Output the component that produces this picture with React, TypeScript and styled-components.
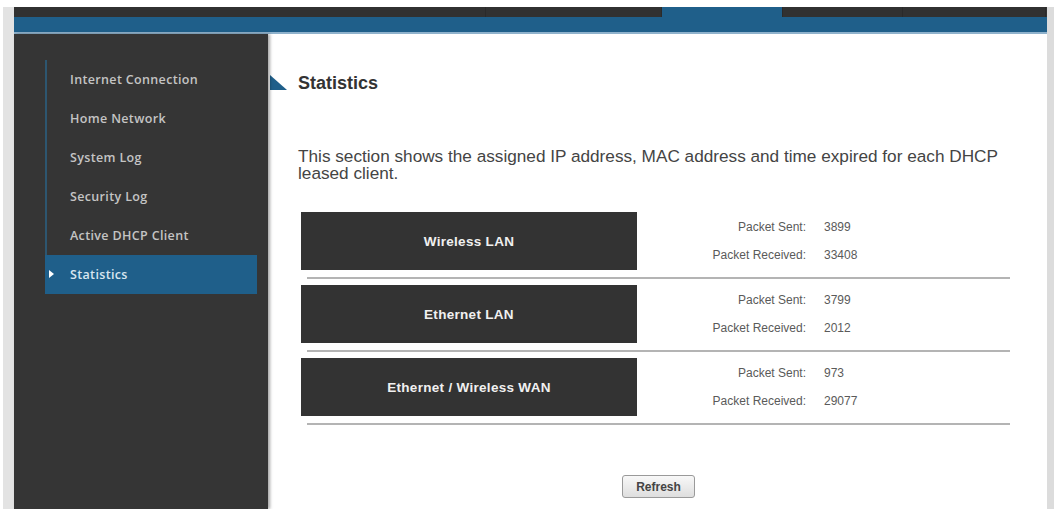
import React from "react";
import styled, { createGlobalStyle } from "styled-components";

const GlobalStyle = createGlobalStyle`
  html, body {
    margin: 0;
    padding: 0;
    background: #ffffff;
  }
  body {
    width: 1054px;
    height: 509px;
    overflow: hidden;
    font-family: "Liberation Sans", Arial, sans-serif;
  }
`;

const menu = [
  "Internet Connection",
  "Home Network",
  "System Log",
  "Security Log",
  "Active DHCP Client",
  "Statistics",
];

const stats = [
  { name: "Wireless LAN", sent: "3899", received: "33408" },
  { name: "Ethernet LAN", sent: "3799", received: "2012" },
  { name: "Ethernet / Wireless WAN", sent: "973", received: "29077" },
];

const tabs = [472, 176, 121, 120, 143];

const App = (): JSX.Element => (
  <>
    <GlobalStyle />
    <TopGap />
    <Frame>
      <TabBar>
        {tabs.map((w, i) => (
          <Tab key={i} active={i === 2} style={{ width: w }} />
        ))}
      </TabBar>
      <BlueBar />
      <Main>
        <Sidebar>
          <Nav>
            {menu.map((item) => (
              <NavItem key={item} selected={item === "Statistics"}>
                {item}
              </NavItem>
            ))}
          </Nav>
        </Sidebar>
        <Content>
          <Heading>
            <Corner />
            Statistics
          </Heading>
          <Intro>
            This section shows the assigned IP address, MAC address and time
            expired for each DHCP leased client.
          </Intro>
          <Rows>
            {stats.map((s) => (
              <Row key={s.name}>
                <Port>{s.name}</Port>
                <Counts>
                  <Label>Packet Sent:</Label>
                  <Value>{s.sent}</Value>
                  <Label>Packet Received:</Label>
                  <Value>{s.received}</Value>
                </Counts>
              </Row>
            ))}
          </Rows>
          <Actions>
            <RefreshButton>Refresh</RefreshButton>
          </Actions>
        </Content>
      </Main>
    </Frame>
  </>
);

const TopGap = styled.div`
  height: 7px;
`;

const Frame = styled.div`
  margin-left: 3px;
  width: 1033px;
  border-left: 11px solid #e3e3e3;
  border-right: 7px solid #dcdcdc;
  height: 502px;
  display: flex;
  flex-direction: column;
`;

const TabBar = styled.div`
  height: 10px;
  display: flex;
  background: #333333;
`;

const Tab = styled.div<{ active?: boolean }>`
  height: 100%;
  background: ${(p) => (p.active ? "#1f5f8a" : "#313131")};
  border-right: 1px solid #2a2a2a;
  box-sizing: border-box;
`;

const BlueBar = styled.div`
  height: 15px;
  background: #1f5f8a;
  border-bottom: 2px solid #8fb2cc;
`;

const Main = styled.div`
  flex: 1;
  display: flex;
  min-height: 0;
`;

const Sidebar = styled.div`
  width: 254px;
  background: #353535;
  padding-top: 26px;
  padding-left: 31px;
  box-sizing: border-box;
  box-shadow: 2px 0 3px rgba(0, 0, 0, 0.35);
  position: relative;
  z-index: 1;
`;

const Nav = styled.ul`
  list-style: none;
  margin: 0;
  padding: 0;
  width: 212px;
  border-left: 2px solid #2d5670;
  box-sizing: border-box;
`;

const NavItem = styled.li<{ selected?: boolean }>`
  height: 39px;
  display: flex;
  align-items: center;
  font-family: "Open Sans", "Liberation Sans", sans-serif;
  font-size: 12.5px;
  font-weight: 600;
  letter-spacing: 0.35px;
  color: ${(p) => (p.selected ? "#d8e6f0" : "#c4c4c4")};
  background: ${(p) => (p.selected ? "#1f5f8a" : "transparent")};
  margin-left: ${(p) => (p.selected ? "-2px" : "0")};
  padding-left: ${(p) => (p.selected ? "25px" : "23px")};
  position: relative;
  &::before {
    content: "";
    display: ${(p) => (p.selected ? "block" : "none")};
    position: absolute;
    left: 4px;
    top: 15px;
    border-left: 5px solid #ffffff;
    border-top: 4px solid transparent;
    border-bottom: 4px solid transparent;
  }
`;

const Content = styled.div`
  flex: 1;
  background: #ffffff;
  padding: 39px 0 0 2px;
  display: flex;
  flex-direction: column;
`;

const Heading = styled.h2`
  margin: 0;
  display: flex;
  align-items: center;
  gap: 11px;
  font-size: 18px;
  font-weight: bold;
  color: #333333;
  height: 20px;
`;

const Corner = styled.span`
  width: 0;
  height: 0;
  border-left: 17px solid #1f5f8a;
  border-top: 15px solid transparent;
  margin-top: -2px;
`;

const Intro = styled.p`
  margin: 55px 0 0 28px;
  max-width: 712px;
  font-size: 17.2px;
  line-height: 17px;
  color: #444444;
`;

const Rows = styled.div`
  margin: 30px 0 0 31px;
  display: flex;
  flex-direction: column;
  gap: 15px;
`;

const Row = styled.div`
  display: flex;
  align-items: center;
  position: relative;
  &::after {
    content: "";
    position: absolute;
    left: 6px;
    width: 703px;
    bottom: -9px;
    height: 2px;
    background: #b4b4b4;
  }
`;

const Port = styled.div`
  width: 336px;
  height: 58px;
  background: #333333;
  color: #f0f0f0;
  font-size: 13.5px;
  font-weight: bold;
  letter-spacing: 0.3px;
  display: flex;
  align-items: center;
  justify-content: center;
`;

const Counts = styled.div`
  margin-left: 69px;
  display: grid;
  grid-template-columns: 100px auto;
  column-gap: 18px;
  row-gap: 12px;
  font-size: 12px;
  line-height: 16px;
  color: #5a5a5a;
`;

const Label = styled.span`
  text-align: right;
`;

const Value = styled.span``;

const Actions = styled.div`
  display: flex;
  justify-content: center;
  margin-top: 59px;
`;

const RefreshButton = styled.button`
  width: 73px;
  height: 23px;
  border: 1px solid #9a9a9a;
  border-radius: 3px;
  background: linear-gradient(#f8f8f8, #dedede);
  font-family: "Liberation Sans", Arial, sans-serif;
  font-size: 12px;
  font-weight: bold;
  color: #444444;
  padding: 0;
`;

export default App;
